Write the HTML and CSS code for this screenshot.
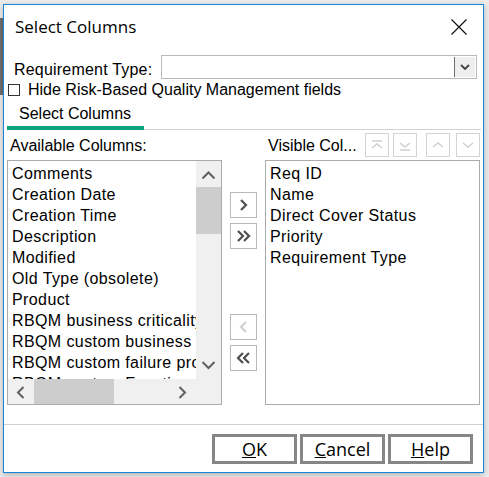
FILE: index.html
```html
<!DOCTYPE html>
<html lang="en">
<head>
    <meta charset="UTF-8">
    <title>Select Columns</title>
    <link rel="stylesheet" href="styles.css">
</head>
<body>
<div class="dialog">
    <div class="titlebar">
        <span class="title">Select Columns</span>
        <svg class="close" width="16" height="16" viewBox="0 0 16 16"><path d="M0.5 0.5L15.5 15.5M15.5 0.5L0.5 15.5"/></svg>
    </div>
    <div class="type-row">
        <span class="type-label">Requirement Type:</span>
        <div class="combo">
            <div class="combo-btn">
                <svg width="10" height="6" viewBox="0 0 10 6"><polyline points="1,1 5,5 9,1"/></svg>
            </div>
        </div>
    </div>
    <div class="check-row">
        <span class="checkbox"></span>
        <span>Hide Risk-Based Quality Management fields</span>
    </div>
    <div class="tabs">
        <div class="tab active">Select Columns</div>
    </div>
    <div class="columns">
        <div class="col-head">Available Columns:</div>
        <div></div>
        <div class="col-head">
            <span class="head-label">Visible Col...</span>
            <span class="tool-btn">
                <svg width="22" height="22" viewBox="0 0 22 22"><path d="M6 7H16M6 14L11 10L16 14"/></svg>
            </span>
            <span class="tool-btn second">
                <svg width="22" height="22" viewBox="0 0 22 22"><path d="M6 9L11 13L16 9M6 16H16"/></svg>
            </span>
            <span class="tool-btn third">
                <svg width="22" height="22" viewBox="0 0 22 22"><path d="M6 13L11 9L16 13"/></svg>
            </span>
            <span class="tool-btn fourth">
                <svg width="22" height="22" viewBox="0 0 22 22"><path d="M6 9L11 13L16 9"/></svg>
            </span>
        </div>

        <div class="listbox scrolled">
            <div class="items">
                <div>Comments</div>
                <div>Creation Date</div>
                <div>Creation Time</div>
                <div>Description</div>
                <div>Modified</div>
                <div>Old Type (obsolete)</div>
                <div>Product</div>
                <div>RBQM business criticality</div>
                <div>RBQM custom business impact</div>
                <div>RBQM custom failure probability</div>
                <div>RBQM custom Functional complexity</div>
            </div>
            <div class="vscroll">
                <div class="sb-btn">
                    <svg width="25" height="25" viewBox="0 0 25 25"><polyline points="6.5,17.5 12.5,11.5 18.5,17.5"/></svg>
                </div>
                <div class="vthumb"></div>
                <div class="track"></div>
                <div class="sb-btn">
                    <svg width="25" height="25" viewBox="0 0 25 25"><polyline points="6.5,8 12.5,14 18.5,8"/></svg>
                </div>
            </div>
            <div class="hscroll">
                <div class="sb-btn">
                    <svg width="25" height="25" viewBox="0 0 25 25"><polyline points="15.5,8 10,13.5 15.5,19"/></svg>
                </div>
                <div class="hthumb"></div>
                <div class="track"></div>
                <div class="sb-btn">
                    <svg width="25" height="25" viewBox="0 0 25 25"><polyline points="8.5,8 14,13.5 8.5,19"/></svg>
                </div>
            </div>
            <div class="corner"></div>
        </div>

        <div class="movers">
            <span class="move-btn">
                <svg width="25" height="24" viewBox="0 0 25 24"><polyline points="10,7 15,12 10,17"/></svg>
            </span>
            <span class="move-btn">
                <svg width="25" height="24" viewBox="0 0 25 24"><polyline points="7,7 12,12 7,17"/><polyline points="13,7 18,12 13,17"/></svg>
            </span>
            <span class="move-btn off gap">
                <svg width="25" height="24" viewBox="0 0 25 24"><polyline points="15,7 10,12 15,17"/></svg>
            </span>
            <span class="move-btn">
                <svg width="25" height="24" viewBox="0 0 25 24"><polyline points="12,7 7,12 12,17"/><polyline points="18,7 13,12 18,17"/></svg>
            </span>
        </div>

        <div class="listbox">
            <div class="items">
                <div>Req ID</div>
                <div>Name</div>
                <div>Direct Cover Status</div>
                <div>Priority</div>
                <div>Requirement Type</div>
            </div>
        </div>
    </div>
    <div class="separator"></div>
    <div class="footer">
        <span class="button"><u>O</u>K</span>
        <span class="button"><u>C</u>ancel</span>
        <span class="button"><u>H</u>elp</span>
    </div>
</div>
</body>
</html>
```

FILE: styles.css
```css
body {
    margin: 0;
    height: 477px;
    overflow: hidden;
    background-color: #ececec;
    background-image: linear-gradient(to bottom, transparent 18px, #6f6f6f 18px, #6f6f6f 95px, transparent 95px);
    background-size: 3px 100%;
    background-repeat: no-repeat;
    font-family: "Liberation Sans", Arial, sans-serif;
    font-size: 16px;
    line-height: 21px;
    color: #000;
}
.dialog {
    width: 481px;
    height: 469px;
    margin: 4px 0 0 3px;
    box-sizing: border-box;
    border: 1px solid #1883d7;
    background: #fff;
    box-shadow: 0 2px 6px rgba(0, 0, 0, 0.25);
    display: flex;
    flex-direction: column;
}
.titlebar {
    height: 50px;
    box-sizing: border-box;
    padding: 0 16px 6px 11px;
    display: flex;
    align-items: center;
    justify-content: space-between;
}
.title {
    font-family: "Open Sans", sans-serif;
    font-size: 17px;
    line-height: 24px;
}
.close path {
    stroke: #111;
    stroke-width: 1.2;
    fill: none;
}
.type-row {
    height: 24px;
    display: flex;
    padding-left: 10px;
}
.type-label {
    width: 147px;
    padding-top: 4px;
    letter-spacing: 0.2px;
}
.combo {
    width: 316px;
    height: 24px;
    box-sizing: border-box;
    border: 1px solid #bababa;
    display: flex;
    justify-content: flex-end;
}
.combo-btn {
    width: 21px;
    margin: 1px 1px 1px 0;
    box-sizing: border-box;
    border-left: 1px solid #6f6f6f;
    background: #eeeeee;
    display: flex;
    align-items: center;
    justify-content: center;
}
.combo-btn polyline {
    stroke: #444;
    stroke-width: 1.8;
    fill: none;
}
.check-row {
    height: 21px;
    display: flex;
    align-items: center;
    gap: 8px;
    padding-left: 4px;
}
.checkbox {
    width: 12px;
    height: 12px;
    box-sizing: border-box;
    border: 1px solid #333;
}
.tabs {
    height: 30px;
    box-sizing: border-box;
    margin: 0 2px 0 3px;
    border-bottom: 1px solid #d2d2d2;
    display: flex;
    align-items: flex-start;
}
.tab {
    width: 137px;
    height: 30px;
    box-sizing: border-box;
    padding: 3px 0 2px 12px;
    margin-bottom: -1px;
}
.tab.active {
    border-bottom: 4px solid #10a37b;
}
.columns {
    display: grid;
    grid-template-columns: 215px 27px 215px;
    grid-template-rows: 30px 245px;
    column-gap: 8px;
    padding: 0 3px;
}
.col-head {
    display: flex;
    align-items: center;
    padding-left: 3px;
    white-space: nowrap;
}
.head-label {
    flex: 1;
}
.tool-btn {
    width: 24px;
    height: 24px;
    box-sizing: border-box;
    border: 1px solid #d4d4d4;
    display: flex;
    align-items: center;
    justify-content: center;
}
.tool-btn.second {
    margin-left: 4px;
}
.tool-btn.third {
    margin-left: 9px;
}
.tool-btn.fourth {
    margin-left: 6px;
}
.tool-btn path {
    stroke: #cfcfcf;
    stroke-width: 1.6;
    fill: none;
}
.listbox {
    height: 245px;
    box-sizing: border-box;
    border: 1px solid #ababab;
    overflow: hidden;
}
.listbox.scrolled {
    display: grid;
    grid-template-columns: 188px 25px;
    grid-template-rows: 218px 25px;
}
.items {
    padding: 2px 0 0 4px;
    white-space: nowrap;
    overflow: hidden;
    letter-spacing: 0.4px;
}
.vscroll {
    background: #f0f0f0;
    display: flex;
    flex-direction: column;
}
.hscroll {
    background: #f0f0f0;
    display: flex;
}
.sb-btn {
    width: 25px;
    height: 25px;
    flex: none;
}
.sb-btn polyline {
    stroke: #606060;
    stroke-width: 2;
    fill: none;
}
.vthumb {
    height: 47px;
    margin-top: 1px;
    background: #cdcdcd;
}
.hthumb {
    width: 80px;
    margin-left: 1px;
    background: #cdcdcd;
}
.track {
    flex: 1;
}
.corner {
    background: #f0f0f0;
}
.movers {
    display: flex;
    flex-direction: column;
    gap: 5px;
    padding-top: 32px;
}
.move-btn {
    width: 27px;
    height: 26px;
    box-sizing: border-box;
    border: 1px solid #b9b9b9;
    display: flex;
    align-items: center;
    justify-content: center;
}
.move-btn.gap {
    margin-top: 60px;
}
.move-btn polyline {
    stroke: #4f4f4f;
    stroke-width: 2.2;
    fill: none;
}
.move-btn.off polyline {
    stroke: #d0d0d0;
}
.separator {
    height: 1px;
    margin-top: 19px;
    background: #cfcfcf;
}
.footer {
    display: flex;
    justify-content: flex-end;
    gap: 3px;
    padding: 9px 10px 0 0;
}
.button {
    width: 85px;
    height: 30px;
    box-sizing: border-box;
    border: 3px solid #868686;
    display: flex;
    align-items: center;
    justify-content: center;
    font-family: "Open Sans", sans-serif;
    font-size: 18px;
}
```
